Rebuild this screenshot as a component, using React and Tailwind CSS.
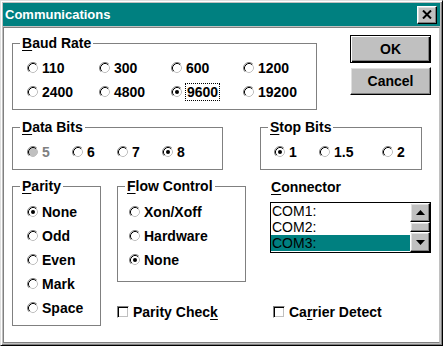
import React from 'react';

const Radio = ({ checked, disabled }) => (
    <svg width="12" height="12" viewBox="0 0 12 12" className="shrink-0">
        <circle cx="6" cy="6" r="4.5" fill={disabled ? '#c0c0c0' : '#fff'} />
        <path d="M2.11 9.89 A5.5 5.5 0 0 1 9.89 2.11" fill="none" stroke="#808080" />
        <path d="M9.89 2.11 A5.5 5.5 0 0 1 2.11 9.89" fill="none" stroke="#fff" />
        <path d="M2.82 9.18 A4.5 4.5 0 0 1 9.18 2.82" fill="none" stroke="#000" />
        <path d="M9.18 2.82 A4.5 4.5 0 0 1 2.82 9.18" fill="none" stroke="#c0c0c0" />
        {checked && <circle cx="6" cy="6" r="2" fill={disabled ? '#808080' : '#000'} />}
    </svg>
);

const RadioItem = ({ label, checked, disabled, focus }) => (
    <div className="flex items-center gap-[3px] h-[16px]">
        <Radio checked={checked} disabled={disabled} />
        {focus ? (
            <span className="border border-dotted border-black -ml-[1px] px-[1px] leading-[16px]">{label}</span>
        ) : (
            <span className={disabled ? 'text-[#808080]' : ''}>{label}</span>
        )}
    </div>
);

const CheckItem = ({ label }) => (
    <div className="flex items-center gap-[4px] h-[16px]">
        <span className="w-[12px] h-[12px] shrink-0 border border-t-[#808080] border-l-[#808080] border-r-white border-b-white shadow-[inset_1px_1px_0_#000,inset_-1px_-1px_0_#c0c0c0]" />
        <span>{label}</span>
    </div>
);

// group frame with the caption sitting on the top edge
const GroupBox = ({ label, className, children }) => (
    <div className={`relative border border-[#808080] ${className}`}>
        <span className="absolute left-[7px] -top-[9px] bg-white px-[2px] leading-[16px]">{label}</span>
        {children}
    </div>
);

const Arrow = ({ up }) => (
    <svg width="9" height="5" viewBox="0 0 9 5">
        <path d={up ? 'M4.5 0 L9 5 L0 5 Z' : 'M0 0 L9 0 L4.5 5 Z'} fill="#000" />
    </svg>
);

const bevel = 'bg-[#c0c0c0] border border-t-white border-l-white border-r-black border-b-black shadow-[inset_-1px_-1px_0_#808080,inset_1px_1px_0_#dfdfdf]';

const App = () => {
    const baud = ['110', '300', '600', '1200', '2400', '4800', '9600', '19200'];

    return (
        <div className="w-[443px] h-[346px] flex flex-col p-[2px] bg-[#c0c0c0] border border-[#dfdfdf] border-r-black border-b-black shadow-[inset_1px_1px_0_#fff,inset_-1px_-1px_0_#808080] font-['Liberation_Sans',Arial,sans-serif] text-[14px] font-bold text-black leading-[16px]">
            {/* Title bar */}
            <div className="h-[23px] shrink-0 bg-[#008080] flex items-center justify-between pl-[2px] pr-[3px]">
                <span className="text-white text-[13px]">Communications</span>
                <div className={`w-[20px] h-[18px] flex items-center justify-center ${bevel}`}>
                    <svg width="10" height="9" viewBox="0 0 10 9">
                        <path d="M1 0.5 L9 8.5 M9 0.5 L1 8.5" stroke="#000" strokeWidth="2" />
                    </svg>
                </div>
            </div>

            {/* Client */}
            <div className="flex-1 mt-[1px] bg-white border border-[#808080] border-r-[#c0c0c0] border-b-[#808080] pl-[8px] pt-[7px]">
                <div className="flex items-start">
                    <GroupBox label={<><u className="underline-offset-[2px]">B</u>aud Rate</>} className="w-[305px] h-[67px] mt-[8px]">
                        <div className="grid grid-cols-[72px_72px_72px_72px] gap-y-[8px] pl-[14px] pt-[16px]">
                            {baud.map(b => (
                                <RadioItem key={b} label={b} checked={b === '9600'} focus={b === '9600'} />
                            ))}
                        </div>
                    </GroupBox>
                    <div className="ml-[33px] flex flex-col gap-[4px]">
                        <button className="w-[81px] h-[28px] bg-[#c0c0c0] border border-black shadow-[inset_1px_1px_0_#fff,inset_-1px_-1px_0_#000,inset_-2px_-2px_0_#808080] font-bold">OK</button>
                        <button className={`w-[81px] h-[28px] font-bold ${bevel}`}>Cancel</button>
                    </div>
                </div>

                <div className="flex items-start mt-[17px]">
                    <GroupBox label={<><u className="underline-offset-[2px]">D</u>ata Bits</>} className="w-[211px] h-[43px]">
                        <div className="grid grid-cols-[45px_45px_45px_45px] pl-[14px] pt-[16px]">
                            <RadioItem label="5" disabled />
                            <RadioItem label="6" />
                            <RadioItem label="7" />
                            <RadioItem label="8" checked />
                        </div>
                    </GroupBox>
                    <GroupBox label={<><u className="underline-offset-[2px]">S</u>top Bits</>} className="ml-[37px] w-[162px] h-[43px]">
                        <div className="grid grid-cols-[45px_63px_40px] pl-[13px] pt-[16px]">
                            <RadioItem label="1" checked />
                            <RadioItem label="1.5" />
                            <RadioItem label="2" />
                        </div>
                    </GroupBox>
                </div>

                <div className="flex items-start mt-[9px]">
                    <GroupBox label={<><u className="underline-offset-[2px]">P</u>arity</>} className="mt-[7px] w-[89px] h-[140px]">
                        <div className="flex flex-col gap-[8px] pl-[14px] pt-[17px]">
                            <RadioItem label="None" checked />
                            <RadioItem label="Odd" />
                            <RadioItem label="Even" />
                            <RadioItem label="Mark" />
                            <RadioItem label="Space" />
                        </div>
                    </GroupBox>

                    <div className="ml-[16px] mt-[7px] flex flex-col">
                        <GroupBox label={<><u className="underline-offset-[2px]">F</u>low Control</>} className="w-[129px] h-[96px]">
                            <div className="flex flex-col gap-[8px] pl-[11px] pt-[17px]">
                                <RadioItem label="Xon/Xoff" />
                                <RadioItem label="Hardware" />
                                <RadioItem label="None" checked />
                            </div>
                        </GroupBox>
                        <div className="mt-[22px]">
                            <CheckItem label={<>Parity Chec<u className="underline-offset-[2px]">k</u></>} />
                        </div>
                    </div>

                    <div className="ml-[24px] flex flex-col">
                        <div className="pl-[1px]"><u className="underline-offset-[2px]">C</u>onnector</div>
                        <div className="mt-[7px] w-[161px] h-[51px] border border-black flex font-normal bg-white">
                            <div className="flex-1 flex flex-col">
                                <div className="h-[16px] pl-[1px]">COM1:</div>
                                <div className="h-[16px] pl-[1px]">COM2:</div>
                                <div className="h-[16px] pl-[1px] bg-[#008080]">COM3:</div>
                            </div>
                            <div className="w-[20px] flex flex-col">
                                <div className={`h-[19px] flex items-center justify-center ${bevel}`}><Arrow up /></div>
                                <div className={`h-[10px] ${bevel}`} />
                                <div className={`flex-1 flex items-center justify-center ${bevel}`}><Arrow /></div>
                            </div>
                        </div>
                        <div className="mt-[51px] pl-[3px]">
                            <CheckItem label={<>Ca<u className="underline-offset-[2px]">r</u>rier Detect</>} />
                        </div>
                    </div>
                </div>
            </div>
        </div>
    );
};

export default App;
